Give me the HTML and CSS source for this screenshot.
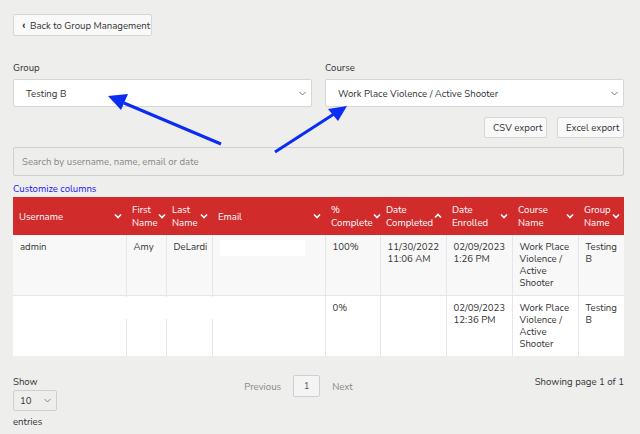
FILE: index.html
```html
<!DOCTYPE html>
<html lang="en">
<head>
    <meta charset="UTF-8">
    <title>Group Report</title>
    <link rel="stylesheet" href="styles.css">
</head>
<body>
    <div class="page">
        <button class="back-btn"><span class="back-caret">&#8249;</span> Back to Group Management</button>

        <div class="filters">
            <div class="field">
                <label>Group</label>
                <div class="select">Testing B <svg class="caret" width="7" height="5" viewBox="0 0 7 5"><path d="M0.5 1 L3.5 4 L6.5 1" fill="none" stroke="#777" stroke-width="1"/></svg></div>
            </div>
            <div class="field">
                <label>Course</label>
                <div class="select">Work Place Violence / Active Shooter <svg class="caret" width="7" height="5" viewBox="0 0 7 5"><path d="M0.5 1 L3.5 4 L6.5 1" fill="none" stroke="#777" stroke-width="1"/></svg></div>
            </div>
        </div>

        <div class="exports">
            <button class="btn">CSV export</button>
            <button class="btn">Excel export</button>
        </div>

        <div class="search">Search by username, name, email or date</div>
        <a class="customize" href="#">Customize columns</a>

        <div class="table-wrap">
            <table class="report">
                <colgroup>
                    <col style="width:113px"><col style="width:40px"><col style="width:46px">
                    <col style="width:113px"><col style="width:55px"><col style="width:66px">
                    <col style="width:66px"><col style="width:66px"><col style="width:46px">
                </colgroup>
                <thead>
                    <tr>
                        <th><div class="th">Username<svg class="sort" viewBox="0 0 8 6"><path d="M1 1.5 L4 4.5 L7 1.5" /></svg></div></th>
                        <th><div class="th">First<br>Name<svg class="sort" viewBox="0 0 8 6"><path d="M1 1.5 L4 4.5 L7 1.5" /></svg></div></th>
                        <th><div class="th">Last<br>Name<svg class="sort" viewBox="0 0 8 6"><path d="M1 1.5 L4 4.5 L7 1.5" /></svg></div></th>
                        <th><div class="th">Email<svg class="sort" viewBox="0 0 8 6"><path d="M1 1.5 L4 4.5 L7 1.5" /></svg></div></th>
                        <th><div class="th">%<br>Complete<svg class="sort" viewBox="0 0 8 6"><path d="M1 1.5 L4 4.5 L7 1.5" /></svg></div></th>
                        <th><div class="th">Date<br>Completed<svg class="sort" viewBox="0 0 8 6"><path d="M1 4.5 L4 1.5 L7 4.5" /></svg></div></th>
                        <th><div class="th">Date<br>Enrolled<svg class="sort" viewBox="0 0 8 6"><path d="M1 1.5 L4 4.5 L7 1.5" /></svg></div></th>
                        <th><div class="th">Course<br>Name<svg class="sort" viewBox="0 0 8 6"><path d="M1 1.5 L4 4.5 L7 1.5" /></svg></div></th>
                        <th><div class="th">Group<br>Name<svg class="sort" viewBox="0 0 8 6"><path d="M1 1.5 L4 4.5 L7 1.5" /></svg></div></th>
                    </tr>
                </thead>
                <tbody>
                    <tr>
                        <td>admin</td>
                        <td>Amy</td>
                        <td>DeLardi</td>
                        <td><span class="redact"></span></td>
                        <td>100%</td>
                        <td>11/30/2022<br>11:06 AM</td>
                        <td>02/09/2023<br>1:26 PM</td>
                        <td>Work Place<br>Violence /<br>Active<br>Shooter</td>
                        <td>Testing<br>B</td>
                    </tr>
                    <tr>
                        <td></td>
                        <td></td>
                        <td></td>
                        <td></td>
                        <td>0%</td>
                        <td></td>
                        <td>02/09/2023<br>12:36 PM</td>
                        <td>Work Place<br>Violence /<br>Active<br>Shooter</td>
                        <td>Testing<br>B</td>
                    </tr>
                </tbody>
            </table>
            <!-- hidden user info in second row -->
            <div class="redact-row"></div>
        </div>

        <div class="footer">
            <div class="length">
                <div>Show</div>
                <div class="small-select">10 <svg width="7" height="5" viewBox="0 0 7 5"><path d="M0.5 1 L3.5 4 L6.5 1" fill="none" stroke="#888" stroke-width="1"/></svg></div>
                <div>entries</div>
            </div>
            <div class="pager">
                <span class="pager-link">Previous</span>
                <span class="page-num">1</span>
                <span class="pager-link">Next</span>
            </div>
            <div class="info">Showing page 1 of 1</div>
        </div>

        <svg class="arrows" width="640" height="434" viewBox="0 0 640 434">
            <line x1="221" y1="144" x2="124" y2="103" stroke="#0b2cf5" stroke-width="3"/>
            <polygon points="108,96 128,94 121,110" fill="#0b2cf5"/>
            <line x1="275" y1="152" x2="334" y2="114" stroke="#0b2cf5" stroke-width="3"/>
            <polygon points="347,106 338,121 328,109" fill="#0b2cf5"/>
        </svg>
    </div>
</body>
</html>
```

FILE: styles.css
```css
body {
    margin: 0;
    background-color: #eeeeed;
    font-family: "Nunito", Lato, "Open Sans", sans-serif;
    color: #333;
    font-size: 9.6px;
}
.page {
    position: relative;
    padding: 14px 16px 0 13px;
    height: 420px;
}
.back-btn {
    display: block;
    font-family: inherit;
    font-size: 9.6px;
    color: #333;
    background-color: #f9f9f9;
    border: 1px solid #d6d6d6;
    border-radius: 2px;
    height: 22px;
    width: 139px;
    padding: 0 6px 0 8px;
    text-align: left;
    white-space: nowrap;
    cursor: pointer;
}
.back-caret {
    font-size: 12px;
    font-weight: bold;
    margin-right: 2px;
}
.filters {
    display: flex;
    gap: 13px;
    margin-top: 25px;
}
.field {
    flex: 1;
}
.field label {
    display: block;
    height: 13px;
    line-height: 13px;
    margin-bottom: 5px;
}
.select {
    display: flex;
    align-items: center;
    justify-content: space-between;
    height: 26px;
    background-color: #fff;
    border: 1px solid #d6d6d6;
    border-radius: 2px;
    padding: 0 5px 0 12px;
}
.exports {
    display: flex;
    justify-content: flex-end;
    gap: 10px;
    margin-top: 10px;
}
.btn {
    font-family: inherit;
    font-size: 9.6px;
    color: #333;
    background-color: #f9f9f9;
    border: 1px solid #d6d6d6;
    border-radius: 2px;
    height: 21px;
    padding: 0 8px;
    white-space: nowrap;
    cursor: pointer;
}
.btn:first-child {
    width: 63px;
}
.btn:last-child {
    width: 67px;
}
.search {
    margin-top: 9px;
    height: 27px;
    line-height: 27px;
    border: 1px solid #cfcfcf;
    border-radius: 2px;
    padding: 0 8px;
    color: #888;
}
.customize {
    display: block;
    color: #1717f5;
    text-decoration: none;
    margin-top: 6px;
    height: 14px;
    line-height: 14px;
}
.table-wrap {
    position: relative;
    margin-top: 1px;
}
.report {
    width: 611px;
    table-layout: fixed;
    border-collapse: collapse;
}
.report th {
    background-color: #d12b2c;
    color: #fff;
    font-weight: normal;
    text-align: left;
    height: 38px;
    padding: 0 4px 0 6px;
}
.th {
    display: flex;
    align-items: center;
    justify-content: space-between;
    line-height: 13px;
}
.sort {
    flex: none;
    width: 8px;
    height: 6px;
    fill: none;
    stroke: #fff;
    stroke-width: 1.6;
}
.report td {
    vertical-align: top;
    padding: 6px 6px 0 7px;
    line-height: 12px;
    border-left: 1px solid #e6e6e6;
    height: 54px;
}
.report td:first-child {
    border-left: none;
}
.report tbody tr:nth-child(1) td {
    background-color: #f8f8f8;
    border-bottom: 1px solid #e6e6e6;
}
.report tbody tr:nth-child(2) td {
    background-color: #fff;
}
.redact {
    display: block;
    width: 85px;
    height: 16px;
    margin-top: -1px;
    background-color: #fff;
}
.redact-row {
    position: absolute;
    left: 0;
    top: 100px;
    width: 312px;
    height: 22px;
    background-color: #fff;
}
.footer {
    display: flex;
    justify-content: space-between;
    margin-top: 19px;
}
.length {
    width: 150px;
    line-height: 14px;
}
.small-select {
    display: flex;
    align-items: center;
    justify-content: space-between;
    width: 31px;
    height: 19px;
    border: 1px solid #cfcfcf;
    border-radius: 2px;
    padding: 0 5px 0 6px;
    margin: 1px 0 4px 0;
}
.pager {
    display: flex;
    align-items: center;
    gap: 12px;
    height: 22px;
    margin-left: 40px;
}
.pager-link {
    color: #888;
}
.page-num {
    display: inline-block;
    width: 25px;
    height: 20px;
    line-height: 20px;
    text-align: center;
    background-color: #f4f4f4;
    border: 1px solid #cfcfcf;
    border-radius: 2px;
    color: #555;
}
.info {
    width: 230px;
    text-align: right;
    line-height: 14px;
}
.arrows {
    position: absolute;
    left: 0;
    top: 0;
    pointer-events: none;
}
```
